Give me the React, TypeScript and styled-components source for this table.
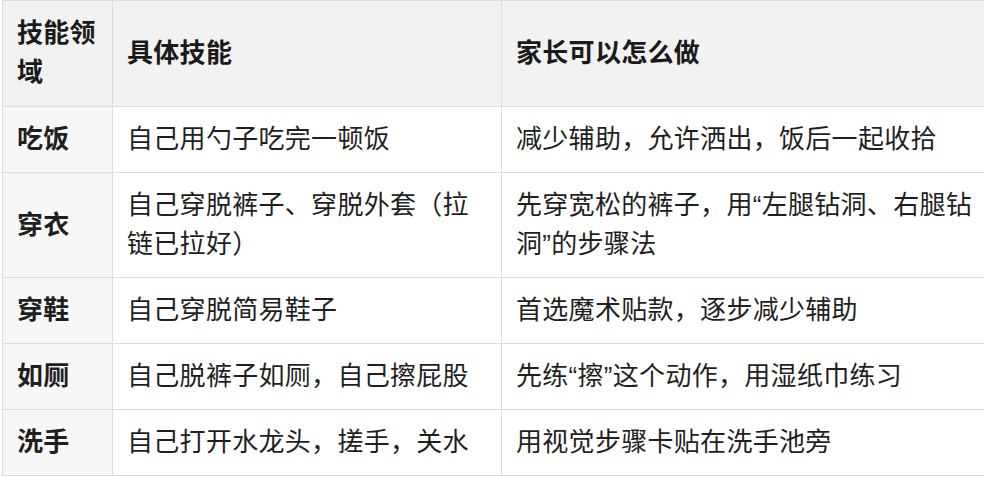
import styled, { createGlobalStyle } from 'styled-components'

const GlobalStyle = createGlobalStyle`
  html, body {
    margin: 0;
    padding: 0;
    background: #fff;
    overflow: hidden;
  }
  body {
    font-family: "Liberation Sans", "Noto Sans CJK SC", sans-serif;
    color: #1f1f1f;
  }
`

const rows = [
  { area: '吃饭', skill: '自己用勺子吃完一顿饭', tip: '减少辅助，允许洒出，饭后一起收拾' },
  { area: '穿衣', skill: '自己穿脱裤子、穿脱外套（拉链已拉好）', tip: '先穿宽松的裤子，用“左腿钻洞、右腿钻洞”的步骤法' },
  { area: '穿鞋', skill: '自己穿脱简易鞋子', tip: '首选魔术贴款，逐步减少辅助' },
  { area: '如厕', skill: '自己脱裤子如厕，自己擦屁股', tip: '先练“擦”这个动作，用湿纸巾练习' },
  { area: '洗手', skill: '自己打开水龙头，搓手，关水', tip: '用视觉步骤卡贴在洗手池旁' },
]

export default function App () {
  return (
    <>
      <GlobalStyle />
      <Wrap>
        <Table>
          <colgroup>
            <col style={{ width: 110 }} />
            <col style={{ width: 389 }} />
            <col style={{ width: 492 }} />
          </colgroup>
          <thead>
            <tr>
              <HeadCell>技能领域</HeadCell>
              <HeadCell>具体技能</HeadCell>
              <HeadCell>家长可以怎么做</HeadCell>
            </tr>
          </thead>
          <tbody>
            {rows.map((r) => (
              <tr key={r.area}>
                <Cell $label>{r.area}</Cell>
                <Cell>{r.skill}</Cell>
                <Cell>{r.tip}</Cell>
              </tr>
            ))}
          </tbody>
        </Table>
      </Wrap>
    </>
  )
}

const Wrap = styled.div`
  width: 984px;
  height: 477px;
  overflow: hidden;
  padding-left: 2px;
  box-sizing: border-box;
`

const Table = styled.table`
  border-collapse: collapse;
  table-layout: fixed;
  width: 991px;
  font-size: 26px;
  line-height: 39px;
  letter-spacing: 0.3px;
`

const HeadCell = styled.th`
  background: #f2f2f2;
  border: 1px solid #dcdcdc;
  padding: 13px 14px 14px;
  text-align: left;
  vertical-align: middle;
  font-weight: 700;
  color: #1a1a1a;
`

const Cell = styled.td<{ $label?: boolean }>`
  background: ${(p) => (p.$label ? '#f7f7f7' : '#fff')};
  border: 1px solid #dcdcdc;
  padding: 13px 14px;
  vertical-align: middle;
  font-weight: ${(p) => (p.$label ? 700 : 400)};
  color: #1f1f1f;
`
